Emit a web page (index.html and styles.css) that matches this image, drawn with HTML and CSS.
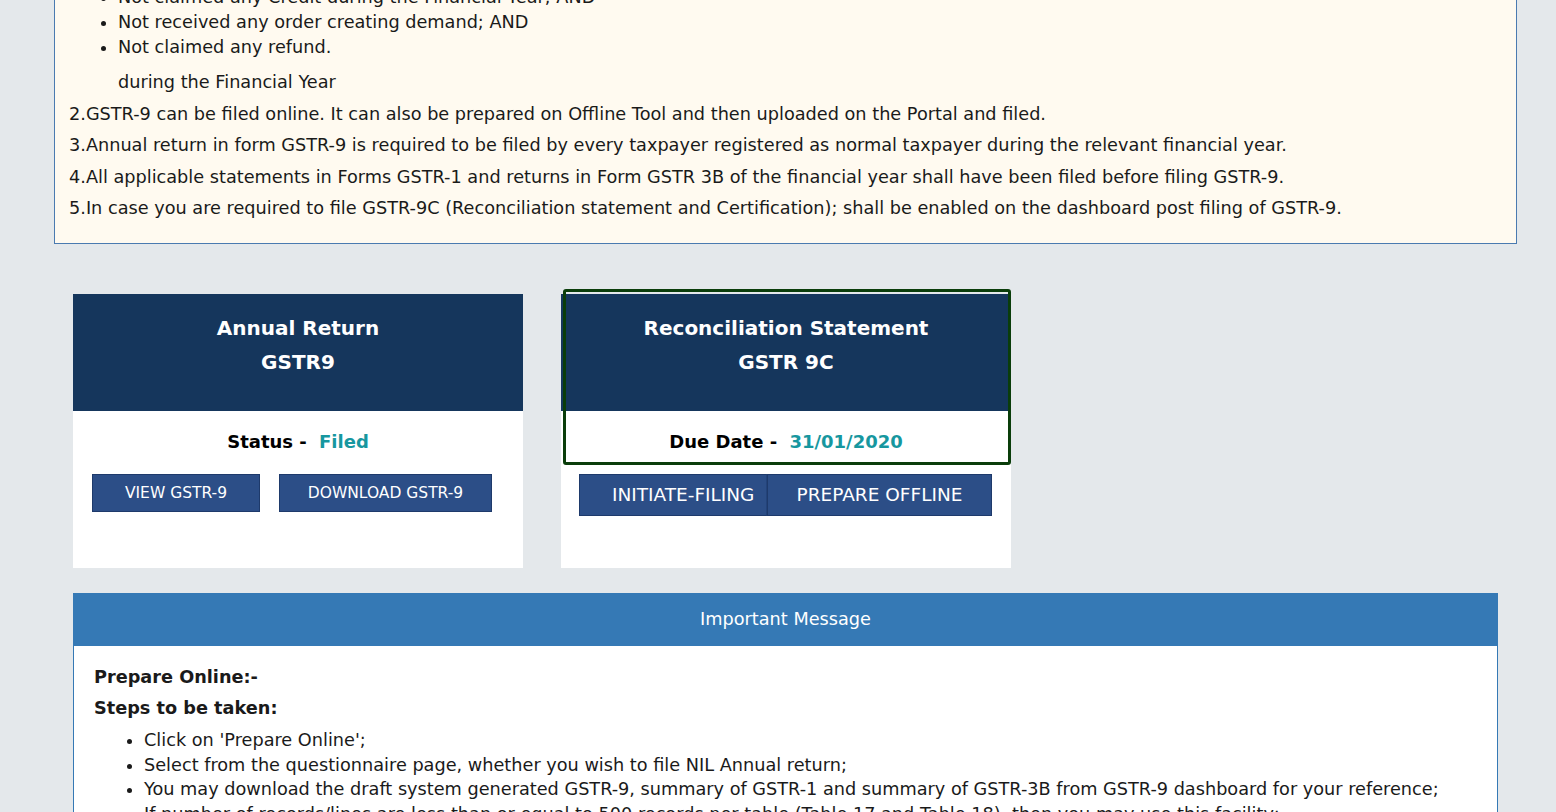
FILE: index.html
```html
<!DOCTYPE html>
<html lang="en">
<head>
  <meta charset="UTF-8">
  <meta name="viewport" content="width=device-width, initial-scale=1.0">
  <title>GSTR-9 Annual Return</title>
  <link rel="stylesheet" href="styles.css">
</head>
<body>

<div id="page">
  <div class="note">
    <ul class="note-list">
      <li>Not claimed any Credit during the Financial Year; AND</li>
      <li>Not received any order creating demand; AND</li>
      <li>Not claimed any refund.</li>
    </ul>
    <p class="note-indent">during the Financial Year</p>
    <p>2.GSTR-9 can be filed online. It can also be prepared on Offline Tool and then uploaded on the Portal and filed.</p>
    <p>3.Annual return in form GSTR-9 is required to be filed by every taxpayer registered as normal taxpayer during the relevant financial year.</p>
    <p>4.All applicable statements in Forms GSTR-1 and returns in Form GSTR 3B of the financial year shall have been filed before filing GSTR-9.</p>
    <p>5.In case you are required to file GSTR-9C (Reconciliation statement and Certification); shall be enabled on the dashboard post filing of GSTR-9.</p>
  </div>

  <div class="inner">
    <div class="tiles">
      <div class="tile">
        <div class="tile-head">Annual Return<br>GSTR9</div>
        <div class="tile-body">
          <div class="tile-status">Status - <span class="value">Filed</span></div>
          <div class="tile-actions">
            <button class="btn">VIEW GSTR-9</button>
            <button class="btn btn-wide">DOWNLOAD GSTR-9</button>
          </div>
        </div>
      </div>

      <div class="tile tile-active">
        <div class="focus-ring"></div>
        <div class="tile-head">Reconciliation Statement<br>GSTR 9C</div>
        <div class="tile-body">
          <div class="tile-status">Due Date - <span class="value">31/01/2020</span></div>
          <div class="btn-group">
            <button class="btn btn-big btn-first">INITIATE-FILING</button>
            <button class="btn btn-big">PREPARE OFFLINE</button>
          </div>
        </div>
      </div>
    </div>

    <div class="message">
      <div class="message-head">Important Message</div>
      <div class="message-body">
        <p class="strong">Prepare Online:-</p>
        <p class="strong">Steps to be taken:</p>
        <ul class="steps">
          <li>Click on 'Prepare Online';</li>
          <li>Select from the questionnaire page, whether you wish to file NIL Annual return;</li>
          <li>You may download the draft system generated GSTR-9, summary of GSTR-1 and summary of GSTR-3B from GSTR-9 dashboard for your reference;</li>
          <li>If number of records/lines are less than or equal to 500 records per table (Table 17 and Table 18), then you may use this facility;</li>
        </ul>
      </div>
    </div>
  </div>
</div>

</body>
</html>
```

FILE: styles.css
```css
html, body {
  height: 100%;
  overflow: hidden;
}

body {
  font-family: 'DejaVu Sans', Verdana, sans-serif;
  background-color: #e4e8eb;
  color: #1a1a1a;
  margin: 0;
}

#page {
  width: 1463px;
  margin-left: 54px;
}

/* notes box, scrolled partly out of view */
.note {
  background-color: #fffaf0;
  border: 1px solid #4a7ab0;
  border-top: none;
  margin-top: -15px;
  padding: 0 14px 18px;
  font-size: 17.7px;
}

.note-list {
  margin: 0;
  padding-left: 49px;
  line-height: 25px;
}

.note p {
  margin: 0;
  line-height: 31.6px;
}

.note .note-indent {
  padding-left: 49px;
  margin-top: 7px;
}

.inner {
  padding: 0 19px;
}

.tiles {
  display: flex;
  gap: 38px;
  margin-top: 50px;
}

.tile {
  position: relative;
  width: 450px;
  height: 274px;
  background-color: #fff;
}

.tile-head {
  background-color: #15365c;
  color: #fff;
  font-weight: bold;
  font-size: 20px;
  line-height: 34px;
  text-align: center;
  height: 117px;
  padding-top: 17px;
  box-sizing: border-box;
}

.tile-status {
  text-align: center;
  font-weight: bold;
  font-size: 18px;
  color: #000;
  padding-top: 20px;
  height: 63px;
  box-sizing: border-box;
}

.tile-status .value {
  color: #17979f;
  margin-left: 6px;
}

.tile-actions {
  display: flex;
  gap: 19px;
  padding-left: 19px;
}

.btn {
  background-color: #2c4e87;
  color: #fff;
  font-family: 'DejaVu Sans', Verdana, sans-serif;
  font-size: 15.5px;
  border: 1px solid #1e3a6b;
  height: 38px;
  width: 168px;
  padding: 0;
  cursor: pointer;
}

.btn-wide {
  width: 213px;
}

.btn-group {
  display: flex;
  padding-left: 18px;
}

.btn-big {
  font-size: 18.5px;
  height: 42px;
  width: 225px;
}

.btn-first {
  width: 188px;
  padding-left: 32px;
  text-align: left;
  border-right-color: #23437a;
}

/* keyboard focus outline on the active tile */
.focus-ring {
  position: absolute;
  left: 2px;
  top: -5px;
  width: 448px;
  height: 176px;
  border: 3px solid #0a3d0a;
  border-radius: 3px;
  box-sizing: border-box;
}

.message {
  margin-top: 25px;
  background-color: #fff;
  border: 1px solid #3579b5;
}

.message-head {
  background-color: #3579b5;
  color: #fff;
  font-size: 17.7px;
  text-align: center;
  height: 52px;
  line-height: 50px;
}

.message-body {
  padding: 16px 20px;
  font-size: 17.7px;
}

.message-body .strong {
  font-weight: bold;
  margin: 0;
  line-height: 31px;
}

.steps {
  margin: 4px 0 0;
  padding-left: 50px;
  line-height: 24.7px;
}
```
